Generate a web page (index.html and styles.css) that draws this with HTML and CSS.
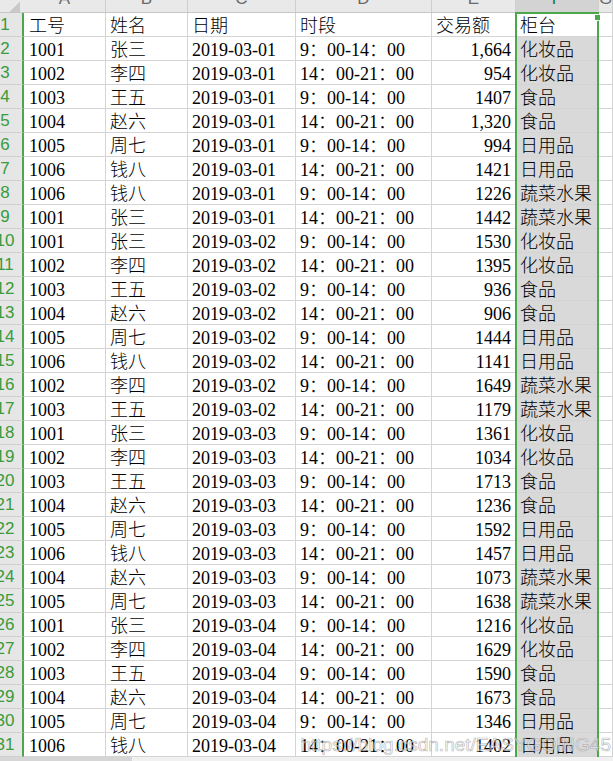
FILE: index.html
```html
<!DOCTYPE html>
<html lang="zh-CN">
<head>
<meta charset="utf-8">
<title>Sheet</title>
<link rel="stylesheet" href="styles.css">
</head>
<body>
<div class="sheet">
  <div class="head">
    <span class="corner"></span><span>A</span><span>B</span><span>C</span><span>D</span><span>E</span><span class="hsel">F</span><span>G</span>
  </div>
  <div class="r"><span class="n"><b>1</b></span><span>工号</span><span>姓名</span><span>日期</span><span>时段</span><span>交易额</span><span class="top">柜台</span><span></span></div>
  <div class="r"><span class="n"><b>2</b></span><span>1001</span><span>张三</span><span>2019-03-01</span><span>9：00-14：00</span><span class="num">1,664</span><span class="sel">化妆品</span><span></span></div>
  <div class="r"><span class="n"><b>3</b></span><span>1002</span><span>李四</span><span>2019-03-01</span><span>14：00-21：00</span><span class="num">954</span><span class="sel">化妆品</span><span></span></div>
  <div class="r"><span class="n"><b>4</b></span><span>1003</span><span>王五</span><span>2019-03-01</span><span>9：00-14：00</span><span class="num">1407</span><span class="sel">食品</span><span></span></div>
  <div class="r"><span class="n"><b>5</b></span><span>1004</span><span>赵六</span><span>2019-03-01</span><span>14：00-21：00</span><span class="num">1,320</span><span class="sel">食品</span><span></span></div>
  <div class="r"><span class="n"><b>6</b></span><span>1005</span><span>周七</span><span>2019-03-01</span><span>9：00-14：00</span><span class="num">994</span><span class="sel">日用品</span><span></span></div>
  <div class="r"><span class="n"><b>7</b></span><span>1006</span><span>钱八</span><span>2019-03-01</span><span>14：00-21：00</span><span class="num">1421</span><span class="sel">日用品</span><span></span></div>
  <div class="r"><span class="n"><b>8</b></span><span>1006</span><span>钱八</span><span>2019-03-01</span><span>9：00-14：00</span><span class="num">1226</span><span class="sel">蔬菜水果</span><span></span></div>
  <div class="r"><span class="n"><b>9</b></span><span>1001</span><span>张三</span><span>2019-03-01</span><span>14：00-21：00</span><span class="num">1442</span><span class="sel">蔬菜水果</span><span></span></div>
  <div class="r"><span class="n"><b>10</b></span><span>1001</span><span>张三</span><span>2019-03-02</span><span>9：00-14：00</span><span class="num">1530</span><span class="sel">化妆品</span><span></span></div>
  <div class="r"><span class="n"><b>11</b></span><span>1002</span><span>李四</span><span>2019-03-02</span><span>14：00-21：00</span><span class="num">1395</span><span class="sel">化妆品</span><span></span></div>
  <div class="r"><span class="n"><b>12</b></span><span>1003</span><span>王五</span><span>2019-03-02</span><span>9：00-14：00</span><span class="num">936</span><span class="sel">食品</span><span></span></div>
  <div class="r"><span class="n"><b>13</b></span><span>1004</span><span>赵六</span><span>2019-03-02</span><span>14：00-21：00</span><span class="num">906</span><span class="sel">食品</span><span></span></div>
  <div class="r"><span class="n"><b>14</b></span><span>1005</span><span>周七</span><span>2019-03-02</span><span>9：00-14：00</span><span class="num">1444</span><span class="sel">日用品</span><span></span></div>
  <div class="r"><span class="n"><b>15</b></span><span>1006</span><span>钱八</span><span>2019-03-02</span><span>14：00-21：00</span><span class="num">1141</span><span class="sel">日用品</span><span></span></div>
  <div class="r"><span class="n"><b>16</b></span><span>1002</span><span>李四</span><span>2019-03-02</span><span>9：00-14：00</span><span class="num">1649</span><span class="sel">蔬菜水果</span><span></span></div>
  <div class="r"><span class="n"><b>17</b></span><span>1003</span><span>王五</span><span>2019-03-02</span><span>14：00-21：00</span><span class="num">1179</span><span class="sel">蔬菜水果</span><span></span></div>
  <div class="r"><span class="n"><b>18</b></span><span>1001</span><span>张三</span><span>2019-03-03</span><span>9：00-14：00</span><span class="num">1361</span><span class="sel">化妆品</span><span></span></div>
  <div class="r"><span class="n"><b>19</b></span><span>1002</span><span>李四</span><span>2019-03-03</span><span>14：00-21：00</span><span class="num">1034</span><span class="sel">化妆品</span><span></span></div>
  <div class="r"><span class="n"><b>20</b></span><span>1003</span><span>王五</span><span>2019-03-03</span><span>9：00-14：00</span><span class="num">1713</span><span class="sel">食品</span><span></span></div>
  <div class="r"><span class="n"><b>21</b></span><span>1004</span><span>赵六</span><span>2019-03-03</span><span>14：00-21：00</span><span class="num">1236</span><span class="sel">食品</span><span></span></div>
  <div class="r"><span class="n"><b>22</b></span><span>1005</span><span>周七</span><span>2019-03-03</span><span>9：00-14：00</span><span class="num">1592</span><span class="sel">日用品</span><span></span></div>
  <div class="r"><span class="n"><b>23</b></span><span>1006</span><span>钱八</span><span>2019-03-03</span><span>14：00-21：00</span><span class="num">1457</span><span class="sel">日用品</span><span></span></div>
  <div class="r"><span class="n"><b>24</b></span><span>1004</span><span>赵六</span><span>2019-03-03</span><span>9：00-14：00</span><span class="num">1073</span><span class="sel">蔬菜水果</span><span></span></div>
  <div class="r"><span class="n"><b>25</b></span><span>1005</span><span>周七</span><span>2019-03-03</span><span>14：00-21：00</span><span class="num">1638</span><span class="sel">蔬菜水果</span><span></span></div>
  <div class="r"><span class="n"><b>26</b></span><span>1001</span><span>张三</span><span>2019-03-04</span><span>9：00-14：00</span><span class="num">1216</span><span class="sel">化妆品</span><span></span></div>
  <div class="r"><span class="n"><b>27</b></span><span>1002</span><span>李四</span><span>2019-03-04</span><span>14：00-21：00</span><span class="num">1629</span><span class="sel">化妆品</span><span></span></div>
  <div class="r"><span class="n"><b>28</b></span><span>1003</span><span>王五</span><span>2019-03-04</span><span>9：00-14：00</span><span class="num">1590</span><span class="sel">食品</span><span></span></div>
  <div class="r"><span class="n"><b>29</b></span><span>1004</span><span>赵六</span><span>2019-03-04</span><span>14：00-21：00</span><span class="num">1673</span><span class="sel">食品</span><span></span></div>
  <div class="r"><span class="n"><b>30</b></span><span>1005</span><span>周七</span><span>2019-03-04</span><span>9：00-14：00</span><span class="num">1346</span><span class="sel">日用品</span><span></span></div>
  <div class="r"><span class="n"><b>31</b></span><span>1006</span><span>钱八</span><span>2019-03-04</span><span>14：00-21：00</span><span class="num">1402</span><span class="sel">日用品</span><span></span></div>
  <div class="scroll"><span class="thumb"></span></div>
  <div class="selbox"><span class="handle"></span></div>
  <div class="watermark">https://blog.csdn.net/EASYGOING45</div>
</div>
</body>
</html>
```
FILE: styles.css
```css
* { box-sizing: border-box; }
html, body { margin: 0; padding: 0; background: #fff; }
body { width: 613px; height: 761px; overflow: hidden; }

.sheet {
  position: relative;
  width: 613px;
  height: 761px;
  overflow: hidden;
  font-family: "Liberation Serif", "Noto Sans CJK SC", serif;
  font-size: 18px;
  font-weight: 300;
  color: #000;
}

.head, .r {
  display: grid;
  grid-template-columns: 24px 82px 82px 108px 136px 84px 83px 1fr;
}

.head {
  height: 13px;
  background: #e9e9e9;
  border-bottom: 1px solid #c6c6c6;
  overflow: hidden;
  font-family: "Liberation Sans", sans-serif;
  font-weight: normal;
  font-size: 17px;
  color: #6a6a6a;
}
.head span {
  display: flex;
  align-items: flex-end;
  justify-content: center;
  line-height: 17px;
  padding-bottom: 5px;
  border-right: 1px solid #cfcfcf;
  overflow: hidden;
}
.head .corner {
  border-right: 2px solid #e9e9e9;
  background: linear-gradient(135deg, transparent 55%, #c9c9c9 55%);
  background-size: 12px 12px;
  background-repeat: no-repeat;
  background-position: right 2px bottom 0;
}
.head .hsel {
  background: #d3d3d3;
  color: #217346;
}

.r { height: 24px; }
.r > span {
  display: flex;
  align-items: flex-end;
  line-height: 20px;
  padding: 0 4px 0 4px;
  border-right: 1px solid #d4d4d4;
  border-bottom: 1px solid #d4d4d4;
  white-space: nowrap;
  overflow: hidden;
}
.r > span:nth-child(2) { padding-left: 5px; }
.r > .n {
  background: #e6e6e6;
  border-right: 2px solid #4aa74a;
  border-bottom: 1px solid #cfcfcf;
  padding: 0;
  justify-content: center;
  align-items: center;
  font-family: "Liberation Sans", sans-serif;
  font-weight: normal;
  font-size: 17px;
  color: #3a9b3a;
}
.r > .n b {
  font-weight: normal;
  flex: 0 0 35px;
  margin-left: -12px;
  text-align: center;
  line-height: 23px;
}
.r > .num { justify-content: flex-end; }
.r > .sel { background: #d9d9d9; }
.r > .top { background: #fff; }

.scroll {
  height: 4px;
  background: #f1f1f1;
}
.scroll .thumb {
  display: block;
  width: 132px;
  height: 4px;
  background: #d6d6d6;
}

.selbox {
  position: absolute;
  left: 515px;
  top: 12px;
  width: 84px;
  height: 745px;
  border-left: 2px solid #4aa74a;
  border-top: 2px solid #4aa74a;
  pointer-events: none;
}
.selbox::after {
  content: "";
  position: absolute;
  right: 0;
  top: 7px;
  bottom: 0;
  width: 2px;
  background: #4aa74a;
}
.handle {
  position: absolute;
  right: -1px;
  top: 1px;
  width: 5px;
  height: 5px;
  background: #4aa74a;
}

.watermark {
  position: absolute;
  right: 2px;
  top: 734px;
  font-family: "Liberation Sans", sans-serif;
  font-weight: normal;
  font-size: 19px;
  color: rgba(255, 255, 255, 0.5);
  -webkit-text-stroke: 0.7px rgba(140, 140, 140, 0.6);
  white-space: nowrap;
  pointer-events: none;
}
```
